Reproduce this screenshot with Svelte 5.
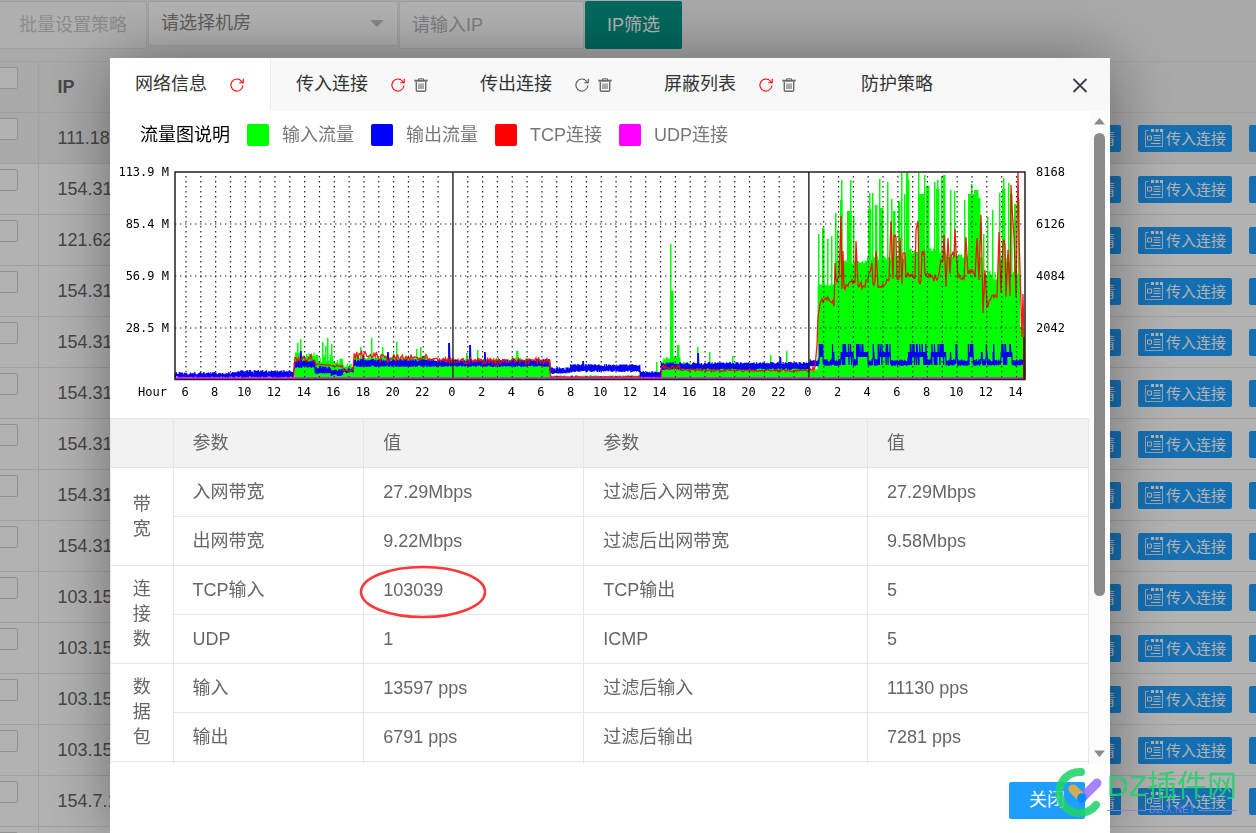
<script>
    const ips = [
        "111.180", "154.31", "121.62", "154.31", "154.31", "154.31", "154.31", "154.31",
        "154.31", "103.15", "103.15", "103.15", "103.15", "154.7.1", "154.7.1",
    ];
    const actions = ["查看详情", "传入连接", "传出连接"];

    const tabs = [
        { name: "网络信息", refresh: "red" },
        { name: "传入连接", refresh: "red", trash: true },
        { name: "传出连接", refresh: "#555", trash: true },
        { name: "屏蔽列表", refresh: "red", trash: true },
        { name: "防护策略" },
    ];
    let active = $state(0);

    const legend = [
        { name: "输入流量", color: "#0f0" },
        { name: "输出流量", color: "#00f" },
        { name: "TCP连接", color: "#f00" },
        { name: "UDP连接", color: "#f0f" },
    ];

    const groups = [
        {
            name: "带宽",
            rows: [
                ["入网带宽", "27.29Mbps", "过滤后入网带宽", "27.29Mbps"],
                ["出网带宽", "9.22Mbps", "过滤后出网带宽", "9.58Mbps"],
            ],
        },
        {
            name: "连接数",
            rows: [
                ["TCP输入", "103039", "TCP输出", "5"],
                ["UDP", "1", "ICMP", "5"],
            ],
        },
        {
            name: "数据包",
            rows: [
                ["输入", "13597 pps", "过滤后输入", "11130 pps"],
                ["输出", "6791 pps", "过滤后输出", "7281 pps"],
            ],
        },
    ];

    // chart geometry
    const left = 65;
    const right = 915;
    const top = 13;
    const bottom = 220;
    const hourWidth = 14.83;
    const step = hourWidth / 12;
    const hourX = (h) => 76 + (h - 6) * hourWidth;

    const hours = Array.from({ length: 57 }, (_, i) => i + 6);
    const scale = [
        { y: 13, l: "113.9 M", r: "8168" },
        { y: 65, l: "85.4 M", r: "6126" },
        { y: 117, l: "56.9 M", r: "4084" },
        { y: 169, l: "28.5 M", r: "2042" },
    ];

    let seed = 7;
    function rand() {
        seed = (seed * 16807) % 2147483647;
        return seed / 2147483647;
    }

    // [until x, height, noise]
    const inBase = [
        [184, 0, 0], [206, 22, 5], [222, 17, 8], [233, 15, 7], [244, 12, 4], [316, 19, 5],
        [440, 16, 5], [530, 2, 2], [551, 0, 1], [570, 17, 6], [590, 14, 4], [698, 12, 4],
        [707, 8, 4], [724, 93, 3], [757, 115, 4], [798, 119, 5], [835, 125, 6], [871, 121, 4],
        [887, 98, 10], [900, 116, 8], [910, 104, 3], [913, 50, 3], [915, 20, 1],
    ];
    // [x, width, height]
    const inSpikes = [
        [187, 1, 36], [190, 1, 40], [212, 1, 37], [215, 1, 33], [217, 1, 41], [221, 1, 35], [250, 1, 32],
        [261, 1, 41], [272, 1, 32], [286, 1, 37], [306, 1, 30], [310, 1, 32], [356, 1, 26], [367, 1, 29],
        [406, 2, 28], [546, 1, 17], [560, 1, 135], [561, 2, 88], [567, 2, 34], [587, 1, 32], [599, 1, 27],
        [622, 1, 23], [660, 1, 24], [676, 1, 28], [708, 1, 145], [712, 2, 151], [717, 1, 140],
        [721, 1, 143], [725, 1, 166], [727, 1, 149], [730, 2, 179], [731, 1, 199], [737, 4, 168],
        [740, 1, 199], [743, 1, 163], [758, 3, 170], [759, 1, 186], [762, 1, 186], [765, 2, 174],
        [769, 1, 200], [770, 3, 171], [777, 1, 197], [781, 1, 180], [783, 2, 168], [788, 2, 178],
        [791, 1, 206], [794, 1, 185], [796, 2, 206], [798, 1, 199], [808, 1, 206], [808, 6, 185], [814, 1, 204],
        [816, 3, 193], [824, 1, 197], [827, 1, 199], [826, 3, 190], [831, 1, 203], [833, 2, 204],
        [840, 1, 189], [844, 1, 188], [854, 1, 179], [858, 6, 185], [861, 1, 195], [864, 4, 189],
        [868, 2, 181], [873, 1, 145], [877, 1, 162], [882, 1, 169], [889, 1, 186], [892, 3, 190],
        [893, 1, 201], [898, 1, 196], [900, 2, 185], [904, 2, 175], [908, 1, 180],
    ];

    // [until x, lowest, highest]
    const outBand = [
        [125, 1, 7], [184, 1, 9], [205, 11, 19], [221, 5, 13], [233, 3, 10], [243, 6, 11],
        [440, 12, 20], [460, 5, 12], [530, 7, 15], [551, 1, 8], [700, 9, 17], [708, 12, 20], [915, 13, 20],
    ];
    const outSpikes = [[191, 28], [253, 24], [339, 36], [360, 34], [375, 27], [278, 27], [588, 26], [670, 22], [473, 18]];
    const outHigh = [
        [709, 713], [722, 724], [731, 743], [746, 758], [763, 764], [768, 780], [798, 817],
        [821, 836], [840, 841], [846, 847], [858, 863], [871, 872], [876, 877], [883, 884], [891, 902],
    ];

    const tcpBase = [
        [184, 0, 0], [205, 20, 8], [221, 14, 2], [233, 13, 2], [243, 8, 2], [270, 22, 8], [318, 19, 8],
        [335, 18, 4], [440, 17, 6], [530, 2, 1], [551, 0, 0], [570, 11, 4], [602, 8, 3], [699, 8, 2],
    ];
    const tcpTail = [
        [699, 7], [705, 12], [707, 34], [708, 62], [710, 75], [715, 80], [718, 82], [722, 76], [725, 116],
        [726, 100], [729, 102], [731, 163], [732, 90], [733, 128], [734, 92], [737, 94], [742, 99],
        [745, 96], [746, 138], [748, 94], [753, 93], [758, 99], [762, 116], [763, 95], [766, 128],
        [768, 92], [775, 94], [779, 99], [781, 158], [783, 100], [784, 143], [787, 100], [790, 141],
        [792, 95], [793, 126], [796, 102], [803, 104], [806, 149], [808, 158], [809, 97], [812, 128],
        [815, 105], [819, 102], [823, 101], [828, 102], [831, 119], [834, 144], [836, 92], [838, 141],
        [840, 105], [841, 124], [845, 150], [846, 129], [848, 102], [854, 100], [856, 142], [858, 105],
        [862, 109], [865, 102], [867, 141], [869, 99], [871, 164], [872, 118], [873, 66], [875, 109],
        [877, 72], [880, 79], [883, 84], [887, 82], [889, 147], [891, 86], [893, 136], [896, 82],
        [898, 129], [900, 83], [901, 194], [902, 171], [904, 143], [906, 82], [908, 207], [909, 142],
        [911, 76], [912, 42], [913, 85], [914, 42], [915, 1],
    ];

    function inPath() {
        let d = `M${left} ${bottom}`;
        for (let x = left; x <= right; x += step) {
            const [, h, n] = inBase.find((s) => x <= s[0]) ?? [0, 0, 0];
            d += `V${(bottom - h - rand() * n).toFixed(1)}H${(x + step).toFixed(1)}`;
        }
        return d + `V${bottom}Z`;
    }

    function outPath() {
        let d = `M${left} ${bottom - 3}`;
        for (let x = left; x <= right - 2; x += step / 2) {
            const [, lo, hi] = outBand.find((s) => x <= s[0]) ?? outBand[0];
            const high = outHigh.some(([a, b]) => x >= a && x <= b);
            const spike = outSpikes.find((s) => Math.abs(s[0] - x) < step / 2);
            let a = lo + rand() * 2;
            let b = hi - rand() * 3;
            if (high) {
                a = rand() < 0.25 ? 14 : 22;
                b = rand() < 0.3 ? 35 : 27;
            }
            if (spike) b = spike[1];
            d += `L${x.toFixed(1)} ${(bottom - a).toFixed(1)}V${(bottom - b).toFixed(1)}`;
        }
        return d;
    }

    function tcpPath() {
        let d = `M${left} ${bottom}`;
        for (let x = left; x < 699; x += step) {
            const [, h, n] = tcpBase.find((s) => x <= s[0]) ?? [0, 0, 0];
            d += `L${x.toFixed(1)} ${(bottom - h - (rand() - 0.3) * n).toFixed(1)}`;
        }
        tcpTail.forEach(([x, h], i) => {
            const prev = tcpTail[i - 1];
            if (prev && x - prev[0] > 2) {
                for (let px = prev[0] + 1; px < x; px++) {
                    const t = (px - prev[0]) / (x - prev[0]);
                    // a tall jump holds its level instead of sloping
                    const level = Math.abs(h - prev[1]) > 20 ? prev[1] : prev[1] + (h - prev[1]) * t;
                    d += `L${px} ${(bottom - level + (rand() - 0.5) * 7).toFixed(1)}`;
                }
            }
            d += `L${x} ${bottom - h}`;
        });
        return d;
    }
</script>

{#snippet refreshIcon(color)}
    <svg width="14" height="14" viewBox="0 0 14 14" fill="none" stroke={color} stroke-width="1.1">
        <path d="M12.9 7.5A6 6 0 1 1 11.6 3.3L12.800 4.600" />
        <path d="M13.3 .8V4.700H9.3" />
    </svg>
{/snippet}

{#snippet trashIcon()}
    <svg width="14" height="14" viewBox="0 0 14 14" fill="none" stroke="#6a6a6a">
        <path d="M4.5 2V.8h5V2" />
        <path d="M.3 2.700h13.4" stroke-width="2" />
        <path d="M2.300 4v8.200q0 1 1 1h7.400q1 0 1-1V4" stroke-width="1.4" />
        <path d="M5 5.500v5.500M7 5.500v5.500M9 5.500v5.500" stroke-width="1.1" />
    </svg>
{/snippet}

<div class="page">
    <div class="toolbar">
        <button class="batch" disabled>批量设置策略</button>
        <div class="select">
            <select aria-label="机房">
                <option>请选择机房</option>
            </select>
        </div>
        <input class="ip" type="text" placeholder="请输入IP" aria-label="IP" />
        <button class="filter">IP筛选</button>
    </div>

    <table class="list">
        <thead>
            <tr>
                <th class="check"><input type="checkbox" aria-label="全选" /></th>
                <th>IP</th>
                <th class="ops"></th>
            </tr>
        </thead>
        <tbody>
            {#each ips as ip, i}
                <tr class:hover={i === 0}>
                    <td class="check"><input type="checkbox" aria-label={ip} /></td>
                    <td>{ip}</td>
                    <td class="ops">
                        <div>
                            {#each actions as action}
                                <button>
                                    <svg width="20" height="20" viewBox="0 0 20 20" fill="none" stroke="#fff">
                                        <path d="M4.500 2.500h-3v16h17v-16" stroke-opacity=".8" />
                                        <path d="M7 2.500h3M11.500 2.500h3M16 2.500h3" stroke-width="3" />
                                        <path d="M3.500 8h4v4h-4zM9.500 7.500h7M9.500 10h7M9.500 12.500h7M7 15.500h9.500" />
                                    </svg>{action}
                                </button>
                            {/each}
                        </div>
                    </td>
                </tr>
            {/each}
        </tbody>
    </table>
</div>

<div class="shade">
    <div class="dialog" role="dialog" aria-label="网络信息">
        <div class="head">
            {#each tabs as tab, i}
                <div class="tab" class:active={i === active}>
                    <button class="name" onclick={() => (active = i)}>{tab.name}</button>
                    {#if tab.refresh}
                        <button class="icon" aria-label="刷新">{@render refreshIcon(tab.refresh)}</button>
                    {/if}
                    {#if tab.trash}
                        <button class="icon trash" aria-label="清空">{@render trashIcon()}</button>
                    {/if}
                </div>
            {/each}
            <button class="icon close" aria-label="关闭窗口">
                <svg width="16" height="16" viewBox="0 0 16 16" stroke="#3d3a4b" stroke-width="1.8">
                    <path d="M1.500 2l13 13M14.500 2l-13 13" />
                </svg>
            </button>
        </div>

        <div class="body">
            <div class="content">
                <div class="legend">
                    <span class="title">流量图说明</span>
                    {#each legend as item}
                        <span class="item"><i style="background: {item.color}"></i>{item.name}</span>
                    {/each}
                </div>

                <svg class="chart" viewBox="0 0 979 259">
                    <path d={inPath()} fill="#0f0" />
                    {#each inSpikes as [x, w, h]}
                        <rect {x} y={bottom - h} width={w + 0.5} height={h} fill="#0f0" />
                    {/each}
                    <path d={outPath()} fill="none" stroke="#00f" stroke-width="1.2" />
                    <path d={tcpPath()} fill="none" stroke="#f00" stroke-width="1.3" stroke-opacity=".9" />
                    <g stroke="#222" stroke-width="1.2" stroke-dasharray="1.4 3.6">
                        {#each hours as h}
                            {#if h % 24 !== 0}
                                <path d="M{hourX(h)} {top + 4}V{bottom}" />
                            {/if}
                        {/each}
                        {#each scale.slice(1) as s}
                            <path d="M{left} {s.y}H{right}" />
                        {/each}
                    </g>
                    <path d="M{hourX(24)} {top}V{bottom}M{hourX(48)} {top}V{bottom}" stroke="#222" stroke-width="1.4" />
                    <path d="M{left} {bottom - 1}H{right}" stroke="#f0f" stroke-width="1.4" />
                    <path d="M{right - 1} {bottom}V{bottom - 42}" stroke="#900" stroke-width="2" />
                    <rect x={left} y={top} width={right - left} height={bottom - top + 0.5} fill="none" stroke="#222" stroke-width="1.5" />
                    {#each scale as s}
                        <text x="59" y={s.y + 4} text-anchor="end">{s.l}</text>
                        <text x="926" y={s.y + 4}>{s.r}</text>
                    {/each}
                    <text x="28" y="237">Hour</text>
                    {#each hours as h}
                        {#if h % 2 === 0}
                            <text x={hourX(h) - 1} y="237" text-anchor="middle">{h % 24}</text>
                        {/if}
                    {/each}
                </svg>

                <table class="info">
                    <colgroup>
                        <col style="width: 6.400%" />
                        <col style="width: 19.500%" />
                        <col style="width: 22.500%" />
                        <col style="width: 29%" />
                        <col style="width: 22.600%" />
                    </colgroup>
                    <thead>
                        <tr>
                            <th></th>
                            <th>参数</th>
                            <th>值</th>
                            <th>参数</th>
                            <th>值</th>
                        </tr>
                    </thead>
                    <tbody>
                        {#each groups as group}
                            {#each group.rows as row, i}
                                <tr>
                                    {#if i === 0}
                                        <th class="group" rowspan={group.rows.length}>
                                            {#each group.name as char}<span>{char}</span>{/each}
                                        </th>
                                    {/if}
                                    {#each row as cell}
                                        <td>
                                            {#if cell === "103039"}
                                                <span class="marked">
                                                    {cell}
                                                    <svg width="128" height="54" viewBox="0 0 128 54">
                                                        <ellipse cx="64" cy="27" rx="62" ry="25" fill="none" stroke="#f93a3a" stroke-width="2.6" />
                                                    </svg>
                                                </span>
                                            {:else}
                                                {cell}
                                            {/if}
                                        </td>
                                    {/each}
                                </tr>
                            {/each}
                        {/each}
                        <tr><td></td><td></td><td></td><td></td><td></td></tr>
                    </tbody>
                </table>
            </div>
            <div class="scroll">
                <svg width="11" height="7" viewBox="0 0 11 7"><path d="M0 6.500L5.500 0L11 6.500z" fill="#8a8a8a" /></svg>
                <div class="track"><div class="thumb"></div></div>
                <svg width="11" height="7" viewBox="0 0 11 7"><path d="M0 .5L5.500 7L11 .5z" fill="#8a8a8a" /></svg>
            </div>
        </div>

        <div class="foot">
            <button>关闭</button>
        </div>
    </div>
</div>

<div class="brand">
    <svg width="48" height="52" viewBox="0 0 48 52" fill="none" stroke-linecap="round">
        <path d="M26 5A20.500 20.500 0 1 0 41 38" stroke="#20d36b" stroke-width="8" />
        <path d="M27 31L42 16" stroke="#9b72ff" stroke-width="9" />
        <path d="M18 22L25 29" stroke="#f0ae38" stroke-width="9" />
        <circle cx="27" cy="31" r="4.800" fill="#0a84ff" />
    </svg>
    <div>
        <div class="brand-name">DZ插件网</div>
        <div class="brand-site">DZ-X.NET</div>
    </div>
</div>

<style>
    :global(body) {
        background: #f2f2f2;
        overflow: hidden;
    }

    .page,
    .shade,
    .brand {
        font: 18px/25px "Liberation Sans", "Noto Sans CJK SC", sans-serif;
        color: #666;
    }

    button,
    input,
    select {
        box-sizing: border-box;
        font: inherit;
        color: inherit;
    }

    button {
        padding: 0;
        border: 0;
        background: none;
        cursor: pointer;
    }

    .page {
        height: 100vh;
        overflow: hidden;
    }

    .toolbar {
        display: flex;
        align-items: flex-start;
        gap: 1px;
        height: 60px;
        padding-top: 1px;
    }

    .toolbar .batch {
        height: 48px;
        padding: 0 19px;
        border: 1px solid #e6e6e6;
        border-left: 0;
        border-radius: 0 2px 2px 0;
        background: #fbfbfb;
        color: #c9c9c9;
    }

    .select {
        position: relative;
        width: 250px;
    }

    .select::after {
        content: "";
        position: absolute;
        right: 14px;
        top: 19px;
        border: 7px solid transparent;
        border-top-color: #c2c2c2;
        pointer-events: none;
    }

    .select select {
        width: 100%;
        height: 45px;
        padding: 0 12px;
        border: 1px solid #e6e6e6;
        border-radius: 2px;
        background: #fff;
        color: #888;
        appearance: none;
    }

    .toolbar .ip {
        width: 185px;
        height: 48px;
        padding: 0 12px;
        border: 1px solid #e6e6e6;
        border-radius: 2px;
        background: #fff;
    }

    .ip::placeholder {
        color: #b5b5b5;
    }

    .toolbar .filter {
        height: 48px;
        padding: 0 22px;
        border-radius: 2px;
        background: #009688;
        color: #fff;
    }

    table {
        width: 100%;
        border-collapse: collapse;
        table-layout: fixed;
    }

    .list {
        background: #fff;
    }

    .list th,
    .list td {
        box-sizing: border-box;
        height: 51px;
        padding: 0 19px;
        border-top: 1px solid #e6e6e6;
        text-align: left;
    }

    .list thead,
    .list .hover {
        background: #f2f2f2;
    }

    .list .check {
        width: 38px;
        padding: 5px 0 0;
        border-right: 1px solid #e6e6e6;
        vertical-align: top;
    }

    .check input {
        display: block;
        width: 22px;
        height: 22px;
        margin: 0 0 0 -4px;
        border: 1px solid #d2d2d2;
        border-radius: 2px;
        background: #fff;
        appearance: none;
    }

    .list .ops {
        width: 229px;
        padding: 0;
        overflow: hidden;
    }

    .ops div {
        display: flex;
        gap: 17px;
    }

    .ops button {
        display: flex;
        flex: none;
        align-items: center;
        gap: 2px;
        width: 94px;
        height: 27px;
        padding-left: 6px;
        border-radius: 2px;
        background: #1e9fff;
        color: #fff;
        font-size: 15px;
        white-space: nowrap;
    }

    .ops svg {
        flex: none;
    }

    .shade {
        position: fixed;
        inset: 0;
        display: flex;
        padding: 58px 146px 0 110px;
        background: rgba(0, 0, 0, 0.3);
    }

    .dialog {
        flex: 1;
        min-width: 0;
        display: flex;
        flex-direction: column;
        background: #fff;
        box-shadow: 1px 1px 62px rgba(0, 0, 0, 0.4);
    }

    .head {
        display: flex;
        flex: none;
        height: 53px;
        background: #f8f8f8;
        color: #333;
    }

    .tab {
        box-sizing: border-box;
        display: flex;
        align-items: center;
        justify-content: center;
        min-width: 150px;
        padding: 0 27px 0 25px;
        white-space: nowrap;
    }

    .tab.active {
        padding-right: 26px;
        border-right: 1px solid #eee;
        background: #fff;
    }

    .icon {
        display: flex;
        margin-left: 23px;
    }

    .icon.trash {
        margin-left: 9px;
    }

    .icon.close {
        align-items: center;
        margin-left: auto;
        margin-right: 22px;
    }

    .body {
        display: flex;
        flex: 1;
        min-height: 0;
    }

    .content {
        flex: 1;
        min-width: 0;
        overflow: hidden;
    }

    .legend {
        display: flex;
        align-items: center;
        gap: 17px;
        height: 48px;
        padding-left: 30px;
        color: #777;
    }

    .legend .title {
        color: #000;
    }

    .item {
        display: flex;
        align-items: center;
        gap: 13px;
    }

    .item i {
        width: 22px;
        height: 22px;
        border-radius: 2px;
    }

    .chart {
        display: block;
        width: 100%;
    }

    .chart text {
        font: 12px "DejaVu Sans Mono", monospace;
        fill: #000;
    }

    .info th,
    .info td {
        box-sizing: border-box;
        height: 49px;
        padding: 0 19px;
        border: 1px solid #e6e6e6;
        font-weight: normal;
        text-align: left;
    }

    .info thead {
        background: #f2f2f2;
    }

    .info .group {
        padding: 0;
        text-align: center;
    }

    .group span {
        display: block;
    }

    .marked {
        position: relative;
    }

    .marked svg {
        position: absolute;
        left: -24px;
        top: -15px;
    }

    .scroll {
        display: flex;
        flex-direction: column;
        align-items: center;
        gap: 8px;
        width: 21px;
        padding: 7px 0;
        box-sizing: border-box;
        background: #fcfcfc;
    }

    .track {
        flex: 1;
        width: 11px;
    }

    .thumb {
        height: 76%;
        border-radius: 6px;
        background: #8a8a8a;
    }

    .foot {
        display: flex;
        flex: none;
        justify-content: flex-end;
        align-items: flex-start;
        height: 69px;
        padding: 18px 25px 0;
        box-sizing: border-box;
    }

    .foot button {
        height: 37px;
        padding: 0 20px;
        border-radius: 2px;
        background: #1e9fff;
        color: #fff;
    }

    .brand {
        position: fixed;
        right: 19px;
        bottom: 14px;
        display: flex;
        gap: 4px;
        opacity: 0.88;
        pointer-events: none;
    }

    .brand-name {
        color: #20d36b;
        font-size: 30px;
        line-height: 38px;
    }

    .brand-site {
        display: flex;
        align-items: center;
        gap: 3px;
        color: #8d7bea;
        font-size: 10px;
        line-height: 10px;
    }

    .brand-site::before,
    .brand-site::after {
        content: "";
        flex: 1;
        height: 1px;
        background: #8d7bea;
    }
</style>
